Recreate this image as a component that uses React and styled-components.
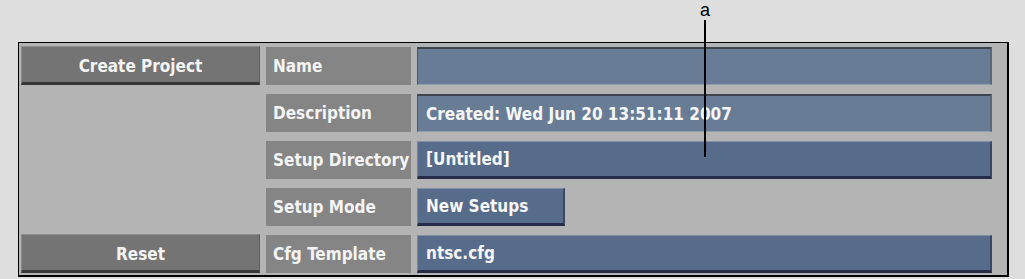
import React from "react";
import styled, { createGlobalStyle } from "styled-components";

const GlobalStyle = createGlobalStyle`
  html, body {
    margin: 0;
    padding: 0;
    background: #dedede;
  }
  body {
    font-family: "DejaVu Sans Condensed", "DejaVu Sans", sans-serif;
  }
`;

const rows = [
  { label: "Name", value: "", kind: "inset" },
  { label: "Description", value: "Created: Wed Jun 20 13:51:11 2007", kind: "inset" },
  { label: "Setup Directory", value: "[Untitled]", kind: "raised" },
  { label: "Setup Mode", value: "New Setups", kind: "raised", narrow: true },
  { label: "Cfg Template", value: "ntsc.cfg", kind: "raised" },
];

function App() {
  return (
    <Page>
      <GlobalStyle />
      <Callout>
        <CalloutLetter>a</CalloutLetter>
        <CalloutLine />
      </Callout>
      <Panel>
        <ActionButton row={1}>Create Project</ActionButton>
        <ActionButton row={5}>Reset</ActionButton>
        {rows.map((row, i) => (
          <React.Fragment key={row.label}>
            <Label row={i + 1}>{row.label}</Label>
            <Field row={i + 1} kind={row.kind} narrow={row.narrow}>
              {row.value}
            </Field>
          </React.Fragment>
        ))}
      </Panel>
    </Page>
  );
}

export default App;

const Page = styled.div`
  position: relative;
  width: 1025px;
  height: 279px;
  padding: 42px 0 0 18px;
  box-sizing: border-box;
  overflow: hidden;
`;

const Panel = styled.div`
  display: grid;
  grid-template-columns: 239px 145px 575px;
  grid-template-rows: repeat(5, 38px);
  column-gap: 6px;
  row-gap: 9px;
  width: 991px;
  box-sizing: border-box;
  padding: 4px 15px 2px 2px;
  background: #b4b4b4;
  border: 1px solid #000;
  border-right-width: 2px;
  border-bottom-width: 2px;
`;

const ActionButton = styled.div`
  grid-column: 1;
  grid-row: ${(p) => p.row};
  display: flex;
  align-items: center;
  justify-content: center;
  margin-top: -1px;
  padding-top: 2px;
  background: #747474;
  border-top: 1px solid #8e8e8e;
  border-left: 1px solid #8a8a8a;
  border-right: 1px solid #5c5c5c;
  border-bottom: 3px solid #383838;
  color: #f4f4f4;
  font-size: 17px;
  font-weight: bold;
`;

const Label = styled.div`
  grid-column: 2;
  grid-row: ${(p) => p.row};
  display: flex;
  align-items: center;
  padding-left: 7px;
  background: #858585;
  color: #f4f4f4;
  font-size: 17px;
  font-weight: bold;
  white-space: nowrap;
  overflow: hidden;
`;

const Field = styled.div`
  grid-column: 3;
  grid-row: ${(p) => p.row};
  display: flex;
  align-items: center;
  box-sizing: border-box;
  width: ${(p) => (p.narrow ? "148px" : "auto")};
  padding-left: 8px;
  color: #f6f6f6;
  font-size: 17px;
  font-weight: bold;
  white-space: nowrap;
  background: ${(p) => (p.kind === "inset" ? "#687d95" : "#576b8a")};
  border-top: ${(p) =>
    p.kind === "inset" ? "2px solid #3e4450" : "1px solid #8090a8"};
  border-bottom: ${(p) =>
    p.kind === "inset" ? "1px solid #8f9fb2" : "3px solid #262b4a"};
  border-left: ${(p) =>
    p.kind === "inset" ? "1px solid #4a5462" : "1px solid #7488a6"};
  border-right: ${(p) =>
    p.kind === "inset" ? "2px solid #5b6878" : "2px solid #3c4766"};
`;

const Callout = styled.div`
  position: absolute;
  left: 698px;
  top: 0;
  display: flex;
  flex-direction: column;
  align-items: center;
  width: 14px;
  z-index: 2;
`;

const CalloutLetter = styled.span`
  font-family: "Liberation Sans", Arial, sans-serif;
  font-size: 18px;
  line-height: 20px;
  color: #000;
`;

const CalloutLine = styled.div`
  width: 2px;
  height: 137px;
  background: #000;
`;
